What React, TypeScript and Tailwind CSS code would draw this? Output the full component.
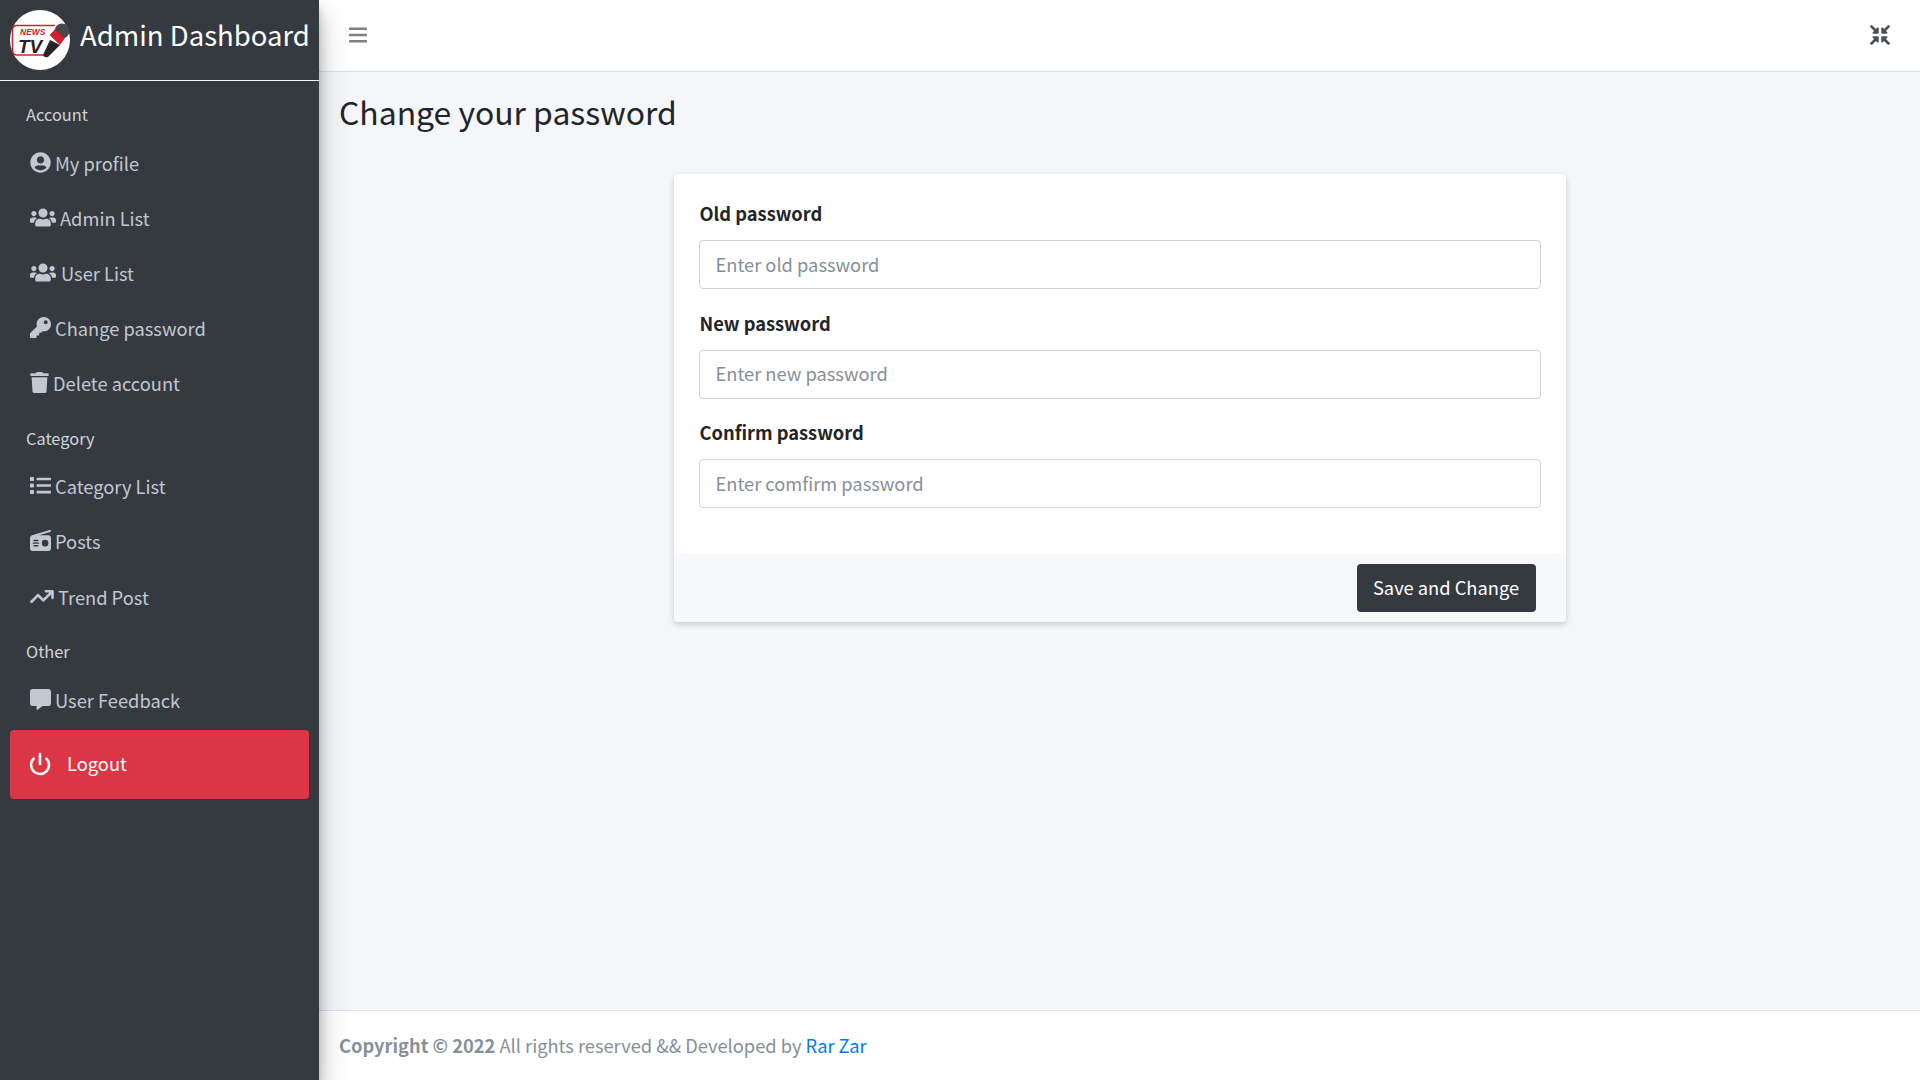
import type { ReactNode } from "react";
import { FaUserCircle, FaUsers, FaKey, FaTrash, FaList, FaCommentAlt, FaCompressArrowsAlt } from "react-icons/fa";
import { FaRadio, FaArrowTrendUp } from "react-icons/fa6";
import { Power } from "lucide-react";

const font = "font-['Noto_Sans_CJK_JP',sans-serif]";

function Logo() {
  return (
    <svg viewBox="0 0 60 60" className="w-[60px] h-[60px] shrink-0">
      <circle cx="30" cy="30" r="30" fill="#fff" />
      <path d="M45 15.5 H7 Q2.5 15.5 2.5 20 V40 Q2.5 45 7 45 H34" fill="none" stroke="#d3202f" strokeWidth="1.5" />
      <text x="10" y="25" fontSize="8.5" fontWeight="700" fontStyle="italic" fill="#d3202f" fontFamily="Liberation Sans">NEWS</text>
      <text x="8" y="43" fontSize="19" fontWeight="700" fontStyle="italic" fill="#2b2226" fontFamily="Liberation Sans">TV</text>
      <path d="M40 30 L50 35 L38 47 Q34 48 33 45 Z" fill="#26262a" />
      <circle cx="52" cy="21" r="7.5" fill="#48484c" />
      <path d="M39.5 25 L45 19.5 L55 28 L50 35 Z" fill="#d3202f" />
    </svg>
  );
}

function Item({ icon, label, height = "h-[55px]" }: { icon: ReactNode; label: string; height?: string }) {
  return (
    <a className={"flex items-center gap-[4px] pl-[30px] text-[18.3px] leading-[28px] text-[#c2c7d0] " + height}>
      {icon}
      <span>{label}</span>
    </a>
  );
}

function Heading({ children, top = "pt-[5px]" }: { children: ReactNode; top?: string }) {
  return <div className={"h-[48px] flex items-center pl-[26px] text-[16.4px] leading-[24px] text-[#d0d4db] " + top}>{children}</div>;
}

function Field({ label, placeholder }: { label: string; placeholder: string }) {
  return (
    <div className="mb-[14.7px]">
      <label className="block mb-[8px] pl-[1px] text-[18.3px] leading-[38px] font-bold text-[#212529]">{label}</label>
      <input
        placeholder={placeholder}
        className="block w-full h-[49px] px-[16px] pb-[2px] text-[18.3px] text-[#495057] bg-white border border-[#ced4da] rounded-[4px] placeholder:text-[#878f96]"
      />
    </div>
  );
}

export default function App() {
  return (
    <div className={"flex h-screen overflow-hidden bg-[#f4f6f9] " + font}>
      <aside className="w-[319px] shrink-0 bg-[#343a40] z-10 shadow-[0_14px_28px_rgba(0,0,0,0.25),0_10px_10px_rgba(0,0,0,0.22)]">
        <div className="h-[81px] flex items-center gap-[10px] pl-[10px] border-b border-[#f4f6f9]">
          <Logo />
          <span className="text-[27.5px] leading-[36px] pb-[12px] text-white whitespace-nowrap">Admin Dashboard</span>
        </div>
        <nav className="pt-[6px]">
          <Heading>Account</Heading>
          <Item icon={<FaUserCircle className="w-[21px] h-[21px]" />} label="My profile" />
          <Item icon={<FaUsers className="w-[26px] h-[21px]" />} label="Admin List" />
          <Item icon={<FaUsers className="w-[26px] h-[21px] mr-[1px]" />} label="User List" />
          <Item icon={<FaKey className="w-[21px] h-[21px]" />} label="Change password" />
          <Item icon={<FaTrash className="w-[19px] h-[21px]" />} label="Delete account" />
          <Heading top="pt-[7px]">Category</Heading>
          <Item icon={<FaList className="w-[21px] h-[21px]" />} label="Category List" />
          <Item icon={<FaRadio className="w-[21px] h-[21px]" />} label="Posts" />
          <Item icon={<FaArrowTrendUp className="w-[24px] h-[21px]" />} label="Trend Post" height="h-[56px] pt-[1px]" />
          <Heading>Other</Heading>
          <Item icon={<FaCommentAlt className="w-[21px] h-[21px]" />} label="User Feedback" />
          <a className="flex items-center h-[69px] mt-[3px] mx-[10px] pl-[18px] pb-[2px] gap-[15px] bg-[#dc3545] rounded-[4px] text-[18.3px] text-white">
            <Power className="w-[24px] h-[24px]" strokeWidth={2.6} />
            <span>Logout</span>
          </a>
        </nav>
      </aside>

      <div className="flex-1 flex flex-col min-w-0">
        <header className="h-[72px] shrink-0 flex items-center justify-between bg-white border-b border-[#dee2e6] pl-[30px] pr-[30px] pb-[2px]">
          <svg viewBox="0 0 18 16" className="w-[18px] h-[16px] text-[#7d7f82]" fill="currentColor">
            <rect x="0" y="0.5" width="18" height="2.4" rx="0.6" />
            <rect x="0" y="6.8" width="18" height="2.4" rx="0.6" />
            <rect x="0" y="13.1" width="18" height="2.4" rx="0.6" />
          </svg>
          <FaCompressArrowsAlt className="w-[20px] h-[20px] text-[#495057]" />
        </header>

        <main className="flex-1 px-[20px]">
          <h1 className="pt-[17px] text-[31.9px] leading-[44px] text-[#212529]">Change your password</h1>
          <div className="w-[892px] mx-auto mt-[41px] bg-white rounded-[4px] shadow-[0_0_1px_rgba(0,0,0,0.125),0_3px_6px_rgba(0,0,0,0.16)] overflow-hidden">
            <div className="pt-[20px] px-[25px] pb-[30.9px]">
              <Field label="Old password" placeholder="Enter old password" />
              <Field label="New password" placeholder="Enter new password" />
              <Field label="Confirm password" placeholder="Enter comfirm password" />
            </div>
            <div className="h-[68px] flex items-center justify-end pr-[30px] bg-[#f7f8fa]">
              <button className="h-[48px] w-[179px] bg-[#343a40] text-white text-[18.3px] rounded-[4px]">Save and Change</button>
            </div>
          </div>
        </main>

        <footer className="h-[70px] shrink-0 flex items-center bg-white border-t border-[#dee2e6] px-[20px] text-[18.3px] text-[#869099] whitespace-pre">
          <strong>Copyright © 2022</strong> All rights reserved &amp;&amp; Developed by <a className="text-[#007bff]">Rar Zar</a>
        </footer>
      </div>
    </div>
  );
}
